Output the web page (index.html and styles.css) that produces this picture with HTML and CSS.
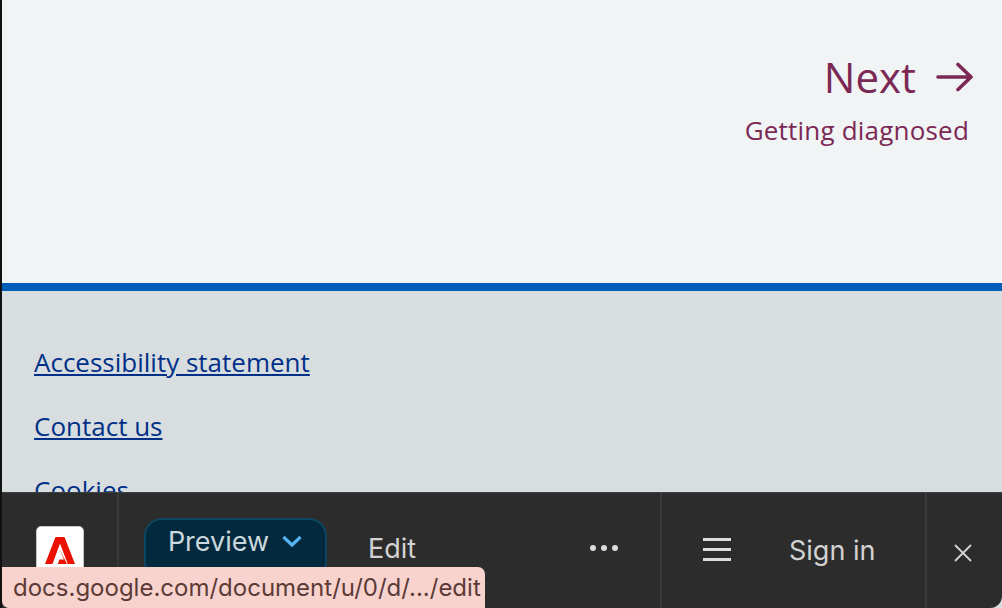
FILE: index.html
```html
<!DOCTYPE html>
<html lang="en">
<head>
  <meta charset="UTF-8" />
  <meta name="viewport" content="width=device-width, initial-scale=1.0"/>
  <title>Getting diagnosed</title>
  <link rel="stylesheet" href="styles.css">
</head>
<body>
  <div class="page">
    <main class="content">
      <a class="next" href="#">
        <span class="next-label">Next
          <svg class="next-arrow" viewBox="0 0 38 30" width="38" height="30" aria-hidden="true">
            <path d="M2 15H35M22 2.500L35 15L22 27.500" fill="none" stroke="currentColor" stroke-width="3.600" stroke-linecap="round" stroke-linejoin="round"/>
          </svg>
        </span>
        <span class="next-title">Getting diagnosed</span>
      </a>
    </main>

    <footer class="footer">
      <a href="#">Accessibility statement</a>
      <a href="#">Contact us</a>
      <a href="#">Cookies</a>
    </footer>

    <div class="toolbar">
      <div class="tool-logo">
        <div class="logo-tile">
          <svg viewBox="0 0 30 27" width="30" height="27" aria-hidden="true">
            <path d="M10.500 0H19.500L30 27H22.800L15 6.500L7.500 27H0Z M15 13L22 27H11.500L15 20Z" fill="#eb1000" fill-rule="nonzero"/>
            <path d="M15.200 13.500L19 22.500H14.500L12.800 27H10.600L15.200 13.500Z" fill="#fff"/>
          </svg>
        </div>
      </div>
      <div class="tool-main">
        <button class="preview-btn">Preview
          <svg viewBox="0 0 22 14" width="22" height="14" aria-hidden="true">
            <path d="M2.500 3L11 11L19.500 3" fill="none" stroke="#56b2f0" stroke-width="3.200"/>
          </svg>
        </button>
        <span class="edit">Edit</span>
        <span class="dots"><i></i><i></i><i></i></span>
      </div>
      <div class="tool-account">
        <span class="burger"><i></i><i></i><i></i></span>
        <span class="sign-in">Sign in</span>
      </div>
      <div class="tool-close">
        <svg viewBox="0 0 20 20" width="20" height="20" aria-hidden="true">
          <path d="M2 2L18 18M18 2L2 18" stroke="#d4d4d4" stroke-width="1.800"/>
        </svg>
      </div>
    </div>

    <div class="status-url">docs.google.com/document/u/0/d/.../edit</div>
  </div>
</body>
</html>
```

FILE: styles.css
```css
html, body {
  margin: 0;
  height: 100%;
  background: #111;
}
body {
  overflow: hidden;
}
.page {
  position: relative;
  height: 608px;
  margin-left: 2px;
  overflow: hidden;
  font-family: "Open Sans", "Noto Sans", sans-serif;
}

.content {
  height: 283px;
  background: #f0f4f5;
  border-bottom: 8px solid #005eb8;
  display: flex;
  justify-content: flex-end;
  align-items: flex-start;
  padding: 51px 28px 0 0;
  box-sizing: content-box;
  height: 232px;
}
.next {
  display: flex;
  flex-direction: column;
  align-items: flex-end;
  color: #7c2855;
  text-decoration: none;
}
.next-label {
  display: flex;
  align-items: center;
  gap: 20px;
  font-size: 42px;
  line-height: 52px;
}
.next-title {
  font-size: 26px;
  line-height: 36px;
  margin-top: 9px;
  margin-right: 5px;
  letter-spacing: 0.2px;
}

.footer {
  background: #d8dde0;
  display: flex;
  flex-direction: column;
  gap: 28px;
  padding: 53px 32px 0;
  height: 317px;
  box-sizing: border-box;
}
.footer a {
  color: #003087;
  font-size: 26px;
  line-height: 36px;
}

.toolbar {
  position: absolute;
  left: 0;
  right: 0;
  bottom: 0;
  height: 116px;
  display: flex;
  background: #2c2c2c;
  border-top: 1px solid #3f3f3f;
  border-bottom-right-radius: 12px;
  box-sizing: border-box;
  color: #d2d2d2;
  font-family: Inter, "Open Sans", sans-serif;
}
.tool-logo {
  width: 115px;
  border-right: 2px solid #3a3a3a;
  box-sizing: content-box;
  padding-top: 33px;
  padding-left: 0;
}
.logo-tile {
  width: 48px;
  height: 60px;
  margin-left: 34px;
  background: #fff;
  border-radius: 5px;
  border: 1px solid #c8c8c8;
  box-sizing: border-box;
  display: flex;
  justify-content: center;
  padding-top: 10px;
}
.tool-main {
  width: 543px;
  display: flex;
  align-items: flex-start;
  padding: 25px 0 0 25px;
  box-sizing: border-box;
  border-right: 2px solid #3a3a3a;
}
.preview-btn {
  width: 183px;
  height: 62px;
  display: flex;
  align-items: center;
  justify-content: center;
  gap: 12px;
  padding: 0 0 16px;
  background: #02293d;
  border: 2px solid #0c4660;
  border-radius: 18px;
  color: #cbd8de;
  font: 27px Inter, "Open Sans", sans-serif;
}
.edit {
  margin-left: 41px;
  margin-top: 11px;
  font-size: 27px;
  line-height: 40px;
}
.dots {
  display: flex;
  gap: 5px;
  margin-left: 174px;
  margin-top: 27px;
}
.dots i {
  width: 6px;
  height: 6px;
  border-radius: 50%;
  background: #dcdcdc;
}
.tool-account {
  width: 265px;
  display: flex;
  align-items: flex-start;
  padding: 36px 0 0 41px;
  box-sizing: border-box;
  border-right: 2px solid #3a3a3a;
}
.burger {
  display: flex;
  flex-direction: column;
  gap: 7px;
  width: 28px;
  margin-top: 9px;
}
.burger i {
  height: 3px;
  background: #dedede;
}
.sign-in {
  margin-left: 58px;
  margin-top: 2px;
  font-size: 27px;
  line-height: 40px;
}
.tool-close {
  flex: 1;
  padding: 50px 0 0 26px;
}

.status-url {
  position: absolute;
  left: 0;
  bottom: 0;
  width: 483px;
  height: 41px;
  box-sizing: border-box;
  padding-left: 11px;
  background: #f8d3ce;
  border-top-right-radius: 7px;
  border-bottom-left-radius: 7px;
  color: #5c3a36;
  font: 24px/42px Inter, Roboto, sans-serif;
}
```
